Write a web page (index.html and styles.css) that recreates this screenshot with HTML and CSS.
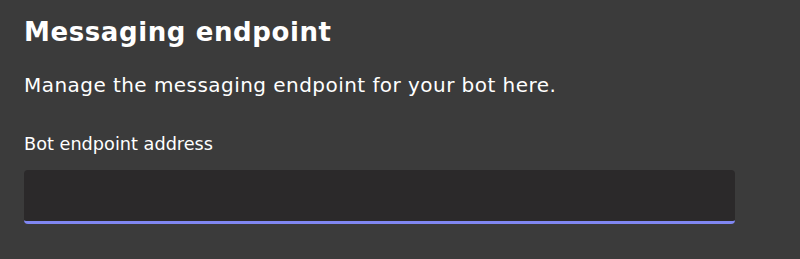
FILE: index.html
```html
<!DOCTYPE html>
<html>
<head>
<meta charset="utf-8">
<link rel="stylesheet" href="styles.css">
</head>
<body>
<div class="page">
  <h1 class="title">Messaging endpoint</h1>
  <p class="desc">Manage the messaging endpoint for your bot here.</p>
  <label class="label" for="ep">Bot endpoint address</label>
  <input class="field" id="ep" type="text">
</div>
</body>
</html>
```
FILE: styles.css
```css
html, body {
  margin: 0;
  padding: 0;
  background: #3b3b3b;
}
.page {
  font-family: "DejaVu Sans", Verdana, sans-serif;
  color: #ffffff;
  padding: 16px 24px 0 24px;
  width: 711px;
  display: flex;
  flex-direction: column;
}
.title {
  margin: 0;
  font-size: 26px;
  font-weight: bold;
  line-height: 32px;
  letter-spacing: 0.6px;
}
.desc {
  margin: 25px 0 0 0;
  font-size: 20px;
  line-height: 24px;
  letter-spacing: 0.45px;
}
.label {
  margin-top: 35px;
  font-size: 17.7px;
  line-height: 24px;
}
.field {
  margin-top: 14px;
  box-sizing: border-box;
  width: 711px;
  height: 54px;
  background: #2b292a;
  border: none;
  border-bottom: 3px solid #8087f2;
  border-radius: 4px;
  outline: none;
  padding: 0 12px;
  color: #fff;
}
```
